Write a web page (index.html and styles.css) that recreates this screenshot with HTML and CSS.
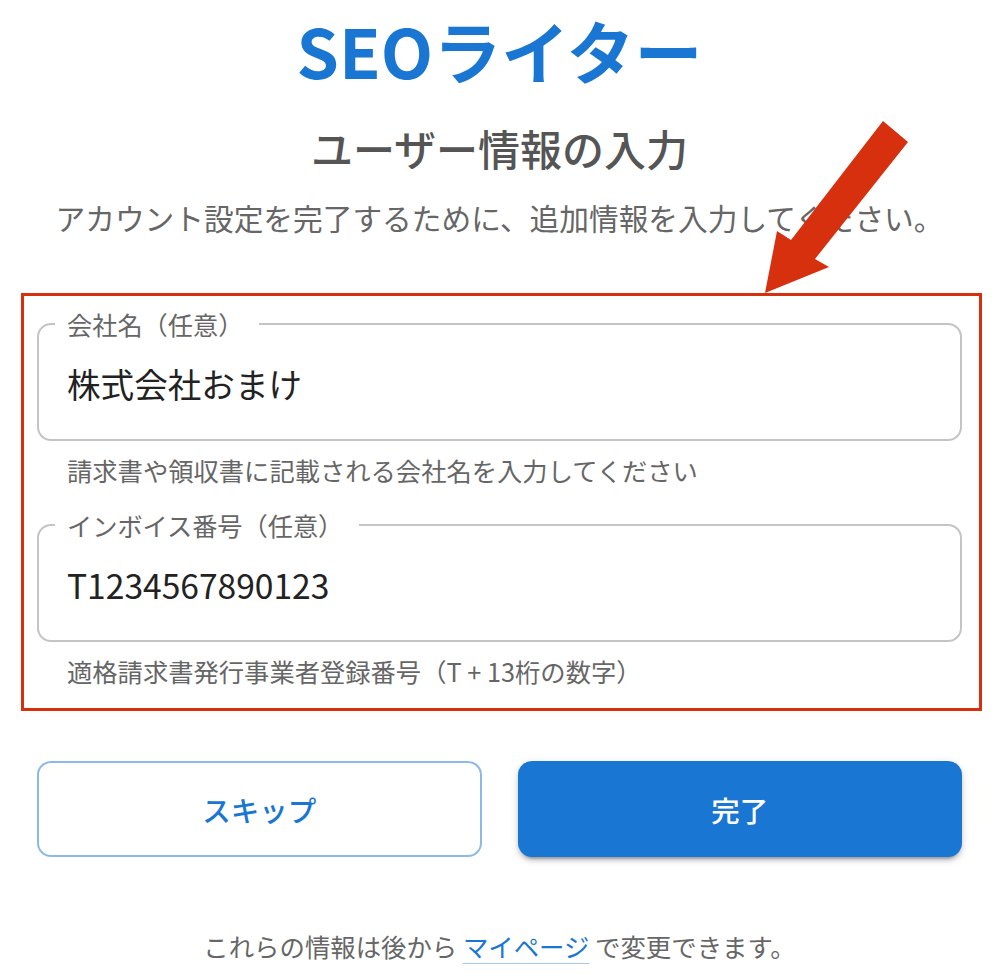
FILE: index.html
```html
<!DOCTYPE html>
<html lang="ja">
<head>
  <meta charset="UTF-8" />
  <meta name="viewport" content="width=device-width, initial-scale=1.0"/>
  <title>SEOライター | ユーザー情報の入力</title>
  <link rel="stylesheet" href="styles.css">
</head>
<body>
  <main class="page">
    <h1 class="logo">SEOライター</h1>
    <h2 class="heading">ユーザー情報の入力</h2>
    <p class="intro">アカウント設定を完了するために、追加情報を入力してください。</p>

    <form class="form">
      <div class="highlight">
        <div class="field">
          <fieldset class="outline">
            <legend>会社名（任意）</legend>
            <input class="input" type="text" value="株式会社おまけ">
          </fieldset>
          <p class="helper">請求書や領収書に記載される会社名を入力してください</p>
        </div>

        <div class="field">
          <fieldset class="outline">
            <legend>インボイス番号（任意）</legend>
            <input class="input" type="text" value="T1234567890123">
          </fieldset>
          <p class="helper">適格請求書発行事業者登録番号（T + 13桁の数字）</p>
        </div>
      </div>

      <div class="actions">
        <button type="button" class="btn btn-outline">スキップ</button>
        <button type="submit" class="btn btn-primary">完了</button>
      </div>
    </form>

    <p class="note">これらの情報は後から <a href="#">マイページ</a> で変更できます。</p>
  </main>

  <!-- annotation arrow pointing at the highlighted fields -->
  <svg class="arrow" width="160" height="185" viewBox="758 114 160 185">
    <polygon fill="#d7300f" points="883,121 908,142 815,259 829,267 765,293 777,231 791,240"/>
  </svg>
</body>
</html>
```

FILE: styles.css
```css
body {
  margin: 0;
  padding: 0;
  background-color: #fff;
  font-family: "Noto Sans CJK JP", "Noto Sans", sans-serif;
  position: relative;
}

.page {
  width: 925px;
  margin-left: 37px;
}

.logo {
  margin: 10px 0 0;
  font-size: 68px;
  line-height: 80px;
  font-weight: 700;
  color: #1976d2;
  text-align: center;
}

.heading {
  margin: 30px 0 0;
  font-size: 42px;
  line-height: 56px;
  font-weight: 500;
  color: #555;
  text-align: center;
}

.intro {
  margin: 22px 0 0;
  font-size: 29.7px;
  line-height: 40px;
  color: #666;
  text-align: center;
}

.highlight {
  margin: 55px -20px 0 -16px;
  border: 3px solid #d7300f;
  padding: 16px 17px 17px 13px;
}

.field + .field {
  margin-top: 23px;
}

.outline {
  margin: 0;
  min-width: 0;
  padding: 24px 28px 33px;
  border: 2px solid #c4c4c4;
  border-radius: 14px;
}

.outline legend {
  margin-left: -12px;
  padding: 0 16px 0 12px;
  font-size: 25.2px;
  line-height: 24px;
  color: #666;
}

.input {
  display: block;
  width: 100%;
  height: 46px;
  margin: 0;
  padding: 0;
  border: none;
  outline: none;
  background: transparent;
  font-family: inherit;
  font-size: 33.6px;
  color: #222;
}

.helper {
  margin: 9px 0 0 30px;
  font-size: 25.3px;
  line-height: 40px;
  color: #666;
}

.actions {
  display: grid;
  grid-template-columns: 1fr 1fr;
  gap: 36px;
  margin-top: 50px;
}

.btn {
  height: 96px;
  border-radius: 14px;
  font-family: inherit;
  font-size: 28.5px;
  font-weight: 500;
  cursor: pointer;
}

.btn-outline {
  background: #fff;
  color: #1976d2;
  border: 2px solid rgba(25, 118, 210, 0.5);
}

.btn-primary {
  background: #1976d2;
  color: #fff;
  border: none;
  box-shadow: 0 6px 2px -4px rgba(0,0,0,0.2), 0 4px 4px 0 rgba(0,0,0,0.14), 0 2px 10px 0 rgba(0,0,0,0.12);
}

.note {
  margin: 71px 0 0;
  font-size: 25.4px;
  line-height: 36px;
  color: #666;
  text-align: center;
}

.note a {
  color: #1976d2;
  text-decoration: underline;
  text-decoration-color: rgba(25, 118, 210, 0.4);
  text-underline-offset: 6px;
}

.arrow {
  position: absolute;
  left: 758px;
  top: 114px;
  pointer-events: none;
}
```
